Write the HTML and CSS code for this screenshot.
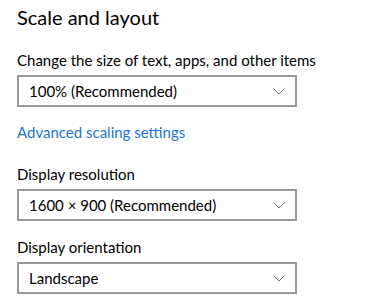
FILE: index.html
```html
<!DOCTYPE html>
<html lang="en">
<head>
    <meta charset="UTF-8">
    <meta name="viewport" content="width=device-width, initial-scale=1.0">
    <title>Scale and layout</title>
    <link rel="stylesheet" href="styles.css">
</head>
<body>
    <main class="panel">
        <h1>Scale and layout</h1>

        <div class="field">
            <label>Change the size of text, apps, and other items</label>
            <div class="select">
                <span>100% (Recommended)</span>
                <svg class="chevron" width="12" height="7" viewBox="0 0 12 7">
                    <path d="M0.5 0.5 L6 6 L11.5 0.5" fill="none" stroke="#777" stroke-width="1"/>
                </svg>
            </div>
        </div>

        <a class="link" href="#">Advanced scaling settings</a>

        <div class="field">
            <label>Display resolution</label>
            <div class="select">
                <span>1600 × 900 (Recommended)</span>
                <svg class="chevron" width="12" height="7" viewBox="0 0 12 7">
                    <path d="M0.5 0.5 L6 6 L11.5 0.5" fill="none" stroke="#777" stroke-width="1"/>
                </svg>
            </div>
        </div>

        <div class="field">
            <label>Display orientation</label>
            <div class="select">
                <span>Landscape</span>
                <svg class="chevron" width="12" height="7" viewBox="0 0 12 7">
                    <path d="M0.5 0.5 L6 6 L11.5 0.5" fill="none" stroke="#777" stroke-width="1"/>
                </svg>
            </div>
        </div>
    </main>
</body>
</html>
```

FILE: styles.css
```css
body, h1, label, a {
    margin: 0;
    padding: 0;
}
body {
    font-family: 'Lato', sans-serif;
    background-color: #ffffff;
    color: #000000;
}
.panel {
    padding: 3px 17px 0 17px;
    display: flex;
    flex-direction: column;
    align-items: flex-start;
}
h1 {
    font-size: 20px;
    font-weight: normal;
    line-height: 28px;
    margin-bottom: 19px;
}
.field {
    display: flex;
    flex-direction: column;
}
.field label {
    font-size: 15px;
    line-height: 20px;
    margin-bottom: 5px;
}
.select {
    width: 280px;
    height: 32px;
    box-sizing: border-box;
    border: 2px solid #999999;
    display: flex;
    align-items: center;
    justify-content: space-between;
    padding: 0 10px;
    font-size: 15px;
}
.chevron {
    margin-top: 1px;
}
.link {
    color: #1a75d2;
    text-decoration: none;
    font-size: 15px;
    line-height: 20px;
    margin: 15px 0 22px 0;
}
.field + .field {
    margin-top: 16px;
}
```
